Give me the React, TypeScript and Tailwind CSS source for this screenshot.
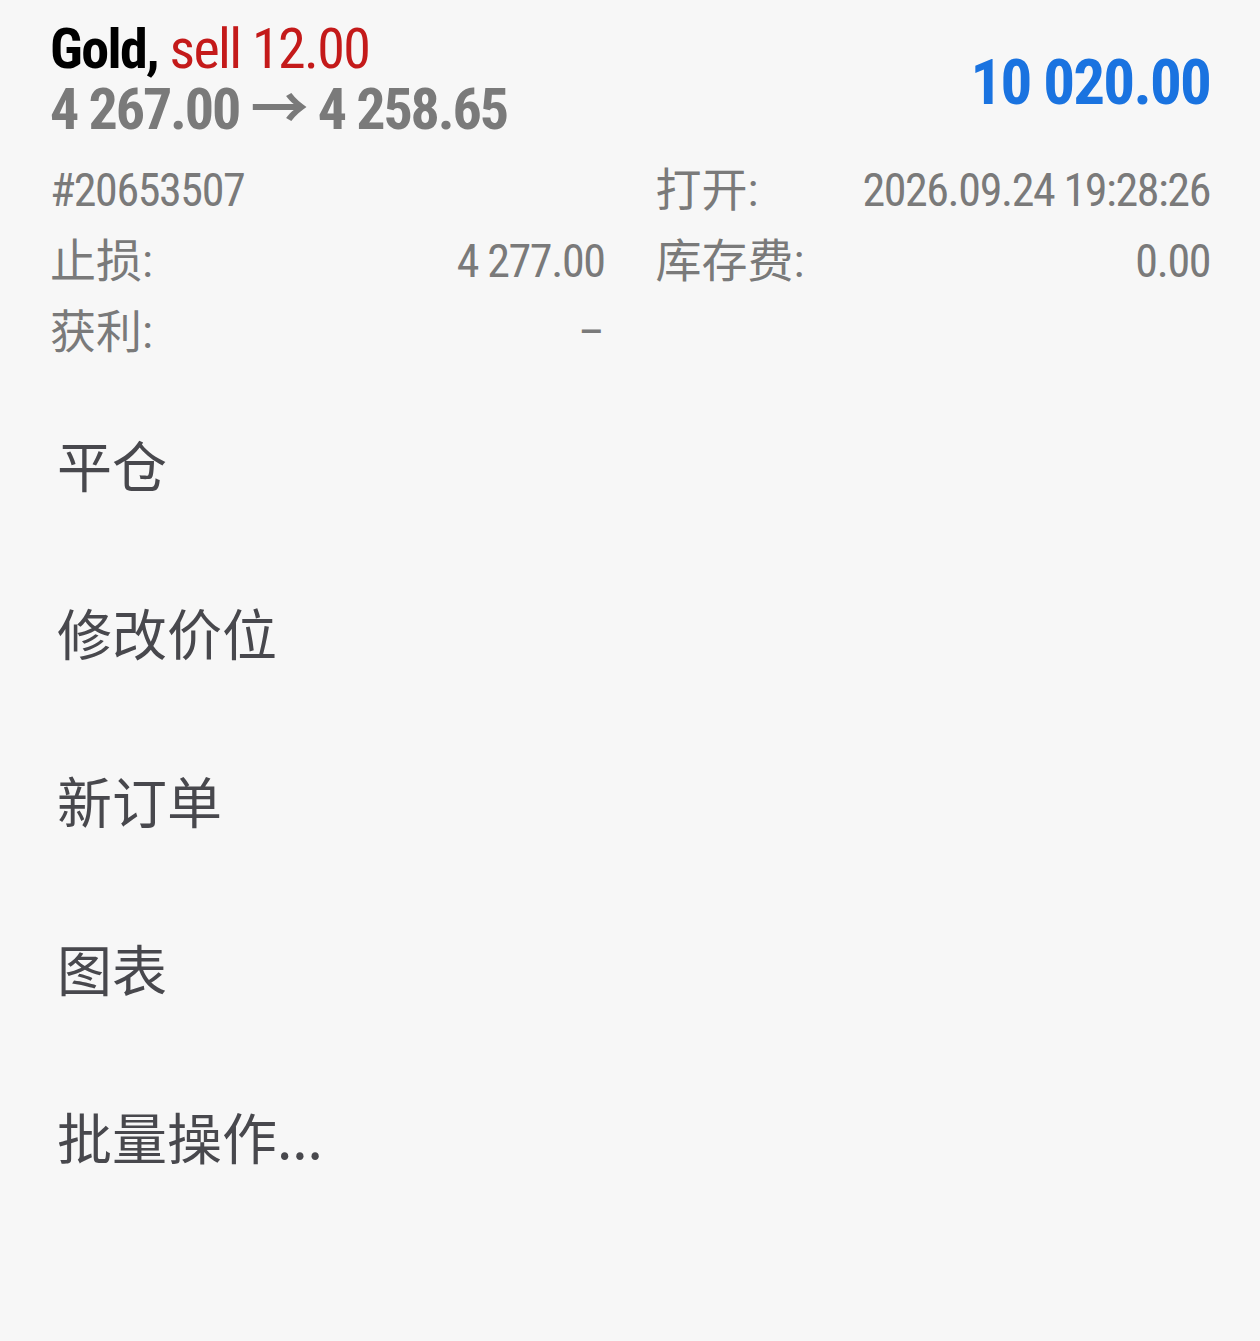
import React from "react";

export default function App() {
  const font = "font-['Roboto_Condensed','Roboto','Noto_Sans_CJK_SC',sans-serif] [font-stretch:75%]";
  return (
    <div className={`w-[1260px] h-[1341px] bg-[#f7f7f7] ${font} overflow-hidden`}>
      <div className="px-[50px] pt-[19px]">
        <div className="flex justify-between">
          <div className="flex flex-col">
            <div className="text-[56px] leading-[60px] font-bold text-black tracking-[-1.6px]">
              Gold, <span className="font-normal text-[#c41a1a]">sell 12.00</span>
            </div>
            <div className="text-[58px] leading-[60px] font-bold text-[#7a7a7a] tracking-[-2.1px]">
              4 267.00 → 4 258.65
            </div>
          </div>
          <div className="text-[63px] leading-[64px] font-bold text-[#1a73e0] mt-[32px] tracking-[-1.8px]">10 020.00</div>
        </div>
        <div className="mt-[16px] grid grid-cols-2 gap-x-[51px] text-[46px] leading-[71px] text-[#7a7a7a]">
          <div className="flex justify-between">
            <span className="tracking-[-1.4px]">#20653507</span>
            <span></span>
          </div>
          <div className="flex justify-between">
            <span>打开:</span>
            <span className="tracking-[-1.4px]">2026.09.24 19:28:26</span>
          </div>
          <div className="flex justify-between">
            <span>止损:</span>
            <span className="tracking-[-1.4px]">4 277.00</span>
          </div>
          <div className="flex justify-between">
            <span>库存费:</span>
            <span className="tracking-[-1.4px]">0.00</span>
          </div>
          <div className="flex justify-between">
            <span>获利:</span>
            <span>–</span>
          </div>
          <div></div>
        </div>
      </div>
      <div className="mt-[11px] pl-[57px] flex flex-col text-[55px] leading-[168px] text-[#48484d] font-['Noto_Sans_CJK_SC',sans-serif]">
        <div>平仓</div>
        <div>修改价位</div>
        <div>新订单</div>
        <div>图表</div>
        <div>批量操作...</div>
      </div>
    </div>
  );
}
